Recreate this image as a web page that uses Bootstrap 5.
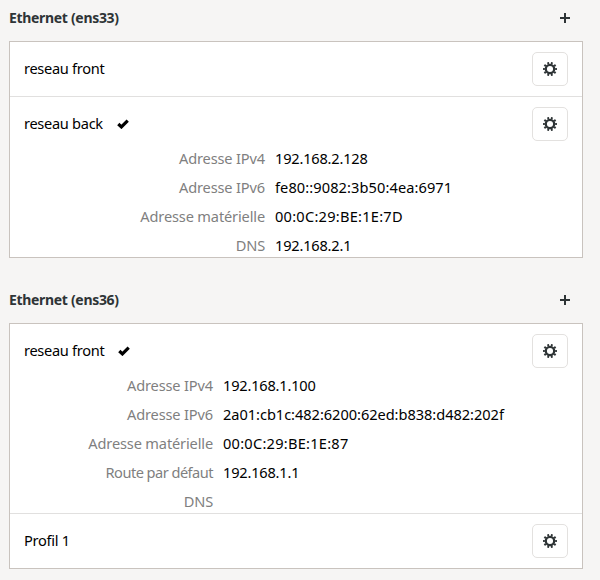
<!DOCTYPE html>
<html lang="fr">
<head>
<meta charset="utf-8">
<meta name="viewport" content="width=device-width, initial-scale=1">
<title>Réseau</title>
<link href="https://cdn.jsdelivr.net/npm/bootstrap@5.3.0/dist/css/bootstrap.min.css" rel="stylesheet">
<style>
body{background:#f6f5f4;color:#000;font:14.6px/22px "Noto Sans","Open Sans",sans-serif;letter-spacing:-.3px;overflow:hidden}
.net-page{width:574px;margin-left:9px}
.net-title{height:41px;padding:7px 9px 12px 0;color:#2e3436}
.net-title h2{font-size:14px;line-height:22px;letter-spacing:-.32px}
.net-second{margin-top:24px}
.net-list{border:1px solid #c9c3be;background:#fff}
.net-item+.net-item{border-top:1px solid #e1e0df}
.net-head{padding:10px 14px}
.net-head>span{margin-top:-2px}
.net-open .net-head{padding-bottom:6px}
.gear-btn{width:36px;height:34px;border:1px solid #e3e1df;border-radius:5px;background:#fff;color:#2e3436}
.add-btn{width:18px;height:22px;color:#2e3436}
.info{display:grid;grid-template-columns:255px 1fr;gap:7px 10px;padding-bottom:1px}
.info-b{grid-template-columns:203px 1fr}
.info dt{color:#7f7f7f;text-align:right;letter-spacing:-.15px}
.info .route{letter-spacing:-.53px}
.info dd{letter-spacing:-.2px}
.info .mac{letter-spacing:.25px}
.info .ip6{letter-spacing:.09px}
.info-b .ip6{letter-spacing:-.04px}
.tick{margin-left:14px}
svg{display:block}
</style>
<script src="https://cdn.jsdelivr.net/npm/bootstrap@5.3.0/dist/js/bootstrap.bundle.min.js"></script>
</head>
<body>
<svg width="0" height="0" class="position-absolute" aria-hidden="true">
<symbol id="gear" viewBox="0 0 14 14"><circle cx="7" cy="7" r="4.2" fill="none" stroke="currentColor" stroke-width="2.3"/><circle cx="7" cy="7" r="6" fill="none" stroke="currentColor" stroke-width="2" pathLength="120" stroke-dasharray="6 6" stroke-dashoffset="3"/></symbol>
<symbol id="tick" viewBox="0 0 12 10"><path d="M1.3 5 4.4 7.9 10.7 1.6" fill="none" stroke="currentColor" stroke-width="3.2"/></symbol>
<symbol id="plus" viewBox="0 0 10 10"><path d="M5 0v10M0 5h10" fill="none" stroke="currentColor" stroke-width="2"/></symbol>
</svg>
<main class="net-page">
<section>
<div class="net-title d-flex align-items-center justify-content-between"><h2 class="fw-bold m-0">Ethernet (ens33)</h2><button class="add-btn btn border-0 p-0 d-flex align-items-center justify-content-center" aria-label="Ajouter"><svg width="10" height="10"><use href="#plus"/></svg></button></div>
<div class="net-list">
<div class="net-item"><div class="net-head d-flex align-items-center"><span>reseau front</span><button class="gear-btn btn p-0 ms-auto d-flex align-items-center justify-content-center" aria-label="Options"><svg width="14" height="14"><use href="#gear"/></svg></button></div></div>
<div class="net-item net-open"><div class="net-head d-flex align-items-center"><span>reseau back</span><svg class="tick" width="12" height="10"><use href="#tick"/></svg><button class="gear-btn btn p-0 ms-auto d-flex align-items-center justify-content-center" aria-label="Options"><svg width="14" height="14"><use href="#gear"/></svg></button></div>
<dl class="info m-0"><dt class="fw-normal">Adresse IPv4</dt><dd class="m-0">192.168.2.128</dd><dt class="fw-normal">Adresse IPv6</dt><dd class="ip6 m-0">fe80::9082:3b50:4ea:6971</dd><dt class="fw-normal">Adresse matérielle</dt><dd class="mac m-0">00:0C:29:BE:1E:7D</dd><dt class="fw-normal">DNS</dt><dd class="m-0">192.168.2.1</dd></dl></div>
</div>
</section>
<section class="net-second">
<div class="net-title d-flex align-items-center justify-content-between"><h2 class="fw-bold m-0">Ethernet (ens36)</h2><button class="add-btn btn border-0 p-0 d-flex align-items-center justify-content-center" aria-label="Ajouter"><svg width="10" height="10"><use href="#plus"/></svg></button></div>
<div class="net-list">
<div class="net-item net-open"><div class="net-head d-flex align-items-center"><span>reseau front</span><svg class="tick" width="12" height="10"><use href="#tick"/></svg><button class="gear-btn btn p-0 ms-auto d-flex align-items-center justify-content-center" aria-label="Options"><svg width="14" height="14"><use href="#gear"/></svg></button></div>
<dl class="info info-b m-0"><dt class="fw-normal">Adresse IPv4</dt><dd class="m-0">192.168.1.100</dd><dt class="fw-normal">Adresse IPv6</dt><dd class="ip6 m-0">2a01:cb1c:482:6200:62ed:b838:d482:202f</dd><dt class="fw-normal">Adresse matérielle</dt><dd class="mac m-0">00:0C:29:BE:1E:87</dd><dt class="route fw-normal">Route par défaut</dt><dd class="m-0">192.168.1.1</dd><dt class="fw-normal">DNS</dt><dd class="m-0"></dd></dl></div>
<div class="net-item"><div class="net-head d-flex align-items-center"><span>Profil 1</span><button class="gear-btn btn p-0 ms-auto d-flex align-items-center justify-content-center" aria-label="Options"><svg width="14" height="14"><use href="#gear"/></svg></button></div></div>
</div>
</section>
</main>
</body>
</html>
